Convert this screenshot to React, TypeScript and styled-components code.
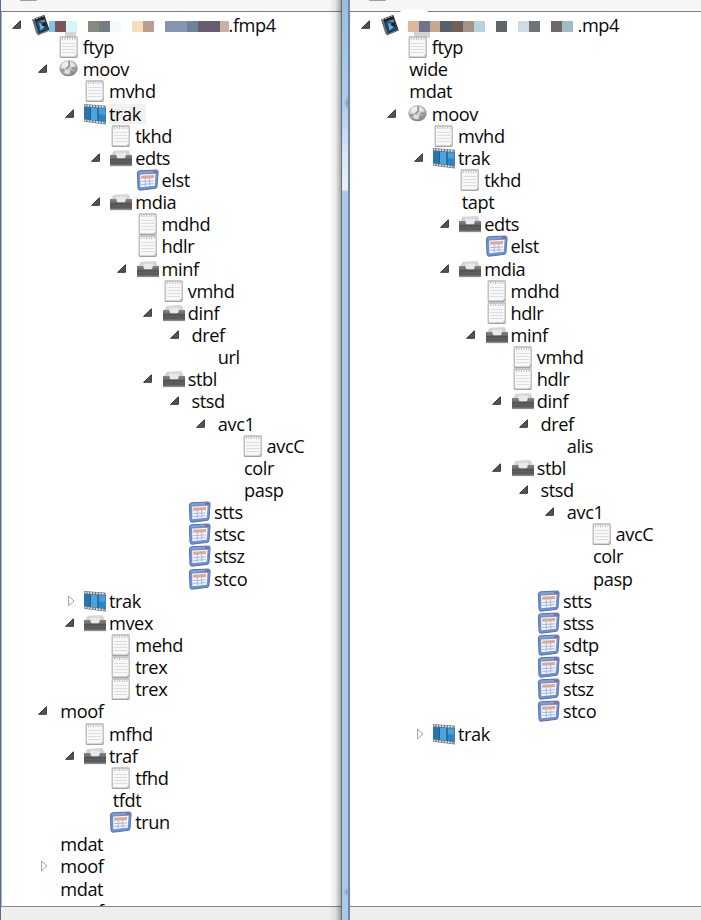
import React from "react";
import styled, { createGlobalStyle } from "styled-components";

const Global = createGlobalStyle`
  * { box-sizing: border-box; }
  html, body { margin: 0; padding: 0; }
  body { font-family: "Open Sans", "Noto Sans", sans-serif; color: #080808; background: #fff; }
`;

const Screen = styled.div`
  display: flex;
  width: 701px;
  height: 920px;
  overflow: hidden;
  background: #fff;
`;
const Pane = styled.section<{ $width: number; $left?: boolean }>`
  width: ${(p) => p.$width}px;
  flex: none;
  display: flex;
  flex-direction: column;
  border-left: ${(p) => (p.$left ? "1px solid #5b6b8b" : "0")};
`;
const Toolbar = styled.header<{ $indent: number }>`
  position: relative;
  height: 12px;
  flex: none;
  padding-left: ${(p) => p.$indent}px;
  background: #f6f6f6;
  border-bottom: 1px solid #7b7e82;
`;
const ToolStub = styled.div`
  width: 17px;
  height: 1px;
  background: #a09d9c;
  border-radius: 0 0 4px 4px;
`;
const Erased = styled.div`
  position: absolute;
  left: 50px;
  top: 9px;
  width: 28px;
  height: 6px;
  border-radius: 50% 50% 0 0;
  background: #fff;
`;
const Body = styled.div<{ $edge: string }>`
  flex: 1;
  min-height: 0;
  overflow: hidden;
  padding-top: 2px;
  border-left: 1px solid ${(p) => p.$edge};
`;
const Footer = styled.footer`
  height: 14px;
  flex: none;
  background: #f0eeed;
  border-top: 1px solid #85888c;
`;
const Shadow = styled.div`
  width: 12px;
  flex: none;
  margin-left: -12px;
  z-index: 1;
  background: linear-gradient(90deg, rgba(0,0,0,0), rgba(0,0,0,0.08) 55%, rgba(0,0,0,0.34));
`;
const Frame = styled.div`
  width: 9px;
  flex: none;
  z-index: 2;
  border-left: 1px solid #64707e;
  border-right: 2px solid #77879a;
  background:
    radial-gradient(ellipse 4px 7px at 6px 103px, rgba(70,95,120,0.5), transparent),
    radial-gradient(ellipse 4px 5px at 5px 892px, rgba(70,95,120,0.35), transparent),
    linear-gradient(#98bedf 0, #a5c8e8 60px, #aecdeb 105px, #dbe6f6 155px, #eceffb 190px, #a9cbea 191px, #a9cbea 100%);
`;
const Row = styled.div<{ $level: number }>`
  height: 22.15px;
  padding-left: ${(p) => 9 + p.$level * 26.25}px;
  display: flex;
  align-items: center;
`;
const Toggle = styled.span`
  width: 19.5px;
  height: 22px;
  flex: none;
  display: flex;
  align-items: center;
`;
const IconSlot = styled.span`
  width: 25px;
  height: 22px;
  flex: none;
  display: flex;
  align-items: center;
`;
const Label = styled.span<{ $plain?: boolean; $selected?: boolean }>`
  height: 20px;
  line-height: 20px;
  padding-right: 5px;
  margin-left: ${(p) => (p.$plain ? 3.5 : 1)}px;
  font-size: 18.2px;
  letter-spacing: -0.4px;
  white-space: nowrap;
  background: ${(p) => (p.$selected ? "#f1f1f1" : "transparent")};
`;
const Mosaic = styled.span<{ $shift: number; $gap: number }>`
  display: flex;
  flex: none;
  margin-left: ${(p) => p.$shift}px;
  margin-right: ${(p) => p.$gap}px;
  z-index: 1;
`;
const Tile = styled.i<{ $w: number; $color: string }>`
  width: ${(p) => p.$w}px;
  height: 11px;
  margin-top: 2px;
  background: ${(p) => p.$color};
`;
const Smudge = styled.i<{ $indent: number; $w: number }>`
  display: block;
  width: ${(p) => p.$w}px;
  height: 6px;
  margin: -4px 0 -2px ${(p) => p.$indent}px;
  background: #d3d2d9;
`;

const Arrow = ({ open }: { open: boolean }) =>
  open ? (
    <svg width="12" height="12" viewBox="0 0 12 12">
      <path d="M9.4 1.8V9.3H1.6Z" fill="#555" stroke="#333" strokeWidth="1" strokeLinejoin="round" />
    </svg>
  ) : (
    <svg width="12" height="14" viewBox="0 0 12 14">
      <path d="M4.6 2V11.8L10 7Z" fill="#fff" stroke="#a3a3a3" strokeWidth="1" />
    </svg>
  );

const DocIcon = () => (
  <svg width="24" height="22" viewBox="0 0 24 22">
    <rect x="3.2" y="1" width="17" height="20.3" rx="0.8" fill="#f8f8f8" stroke="#b8b8b6" strokeWidth="1.3" />
    <path d="M3.4 21.3H19L20.4 19.5" fill="none" stroke="#9a9a98" strokeWidth="1.1" />
    <path d="M5.5 1.2V4M8 1.2V4M10.5 1.2V4M13 1.2V4M15.5 1.2V4M18 1.2V4" stroke="#c0c0be" strokeWidth="1" />
    <path d="M5.2 7.5H18.4M5.2 10.5H18.4M5.2 13.5H18.4M5.2 16.5H18.4" stroke="#d9dee4" strokeWidth="1" />
    <path d="M17 20.8L20 17.6V20.8Z" fill="#c6c6c4" />
  </svg>
);
const DrawerIcon = () => (
  <svg width="24" height="22" viewBox="0 0 24 22">
    <defs>
      <linearGradient id="drawer" x1="0" y1="0" x2="0" y2="1">
        <stop offset="0" stopColor="#858585" />
        <stop offset="0.5" stopColor="#5c5c5c" />
        <stop offset="1" stopColor="#727272" />
      </linearGradient>
    </defs>
    <path d="M4.5 3.8L19.5 2.8L22 8.5H2Z" fill="#dedede" />
    <path d="M4.3 5.2H20M3.2 7H21" stroke="#c4c4c4" strokeWidth="0.8" />
    <path d="M1 8H23V19H1Z" fill="url(#drawer)" />
    <path d="M7 5.5H17.2L16.4 10.2Q16.2 11.3 15 11.3H9.2Q8 11.3 7.8 10.2Z" fill="#e9e9e9" />
    <path d="M1 12.8H23M1 16H23" stroke="#4c4c4c" strokeWidth="0.9" />
    <path d="M1 18.7H23" stroke="#9a9a9a" strokeWidth="0.8" />
  </svg>
);
const TableIcon = () => (
  <svg width="24" height="22" viewBox="0 0 24 22">
    <path d="M3.7 1.8L20 1Q22.2 1 22.1 3L21 17.5Q20.9 19.2 19 19.4L4.2 21.2Q2.2 21.3 2 19.3L1.4 4Q1.4 2 3.7 1.8Z" fill="#6e90cc" stroke="#5675b4" strokeWidth="1" />
    <path d="M3.2 3.4L20 2.4" stroke="#86a6dc" strokeWidth="1.2" />
    <path d="M17 2.9L21 2.7" stroke="#b35776" strokeWidth="1.6" />
    <path d="M4.1 5.6L19.6 4.8L18.8 16.8L4.4 18.3Z" fill="#f1f4fc" />
    <path d="M5.2 8.2L18 7.4" stroke="#e6a684" strokeWidth="3" />
    <path d="M5.3 12.6L17.8 11.9M5.3 15.5L17.5 14.6M9.3 8.2V17M13.7 8V16.6" stroke="#9fb3de" strokeWidth="0.9" />
  </svg>
);
const FilmIcon = () => (
  <svg width="24" height="22" viewBox="0 0 24 22">
    <path d="M1 1L23 2.7V21.5L1 18.8Z" fill="#66727a" />
    <path d="M1.2 4.3L23 5.8V18.6L1.2 16Z" fill="#2a84c6" />
    <path d="M1.2 4.3L6.6 4.7V16.6L1.2 16Z" fill="#2b73ab" />
    <path d="M8 4.8L14.3 5.2V17.5L8 16.8Z" fill="#4ba4dd" />
    <path d="M16 5.4L22 5.8V12L16 11Z" fill="#489fd9" />
    <path d="M7.3 4.7V16.7M15 5.3V17.7" stroke="#1d5c8a" strokeWidth="1" />
    <path d="M1.5 2.5L22.5 4.1M1.5 17.4L22.5 20" stroke="#e3e6e7" strokeWidth="1.7" strokeDasharray="1.8 1.1" />
  </svg>
);
const GlobeIcon = () => (
  <svg width="24" height="22" viewBox="0 0 24 22">
    <defs>
      <radialGradient id="ball" cx="0.42" cy="0.3" r="0.75">
        <stop offset="0" stopColor="#ededed" />
        <stop offset="0.5" stopColor="#bcbcbc" />
        <stop offset="1" stopColor="#757575" />
      </radialGradient>
    </defs>
    <ellipse cx="11.5" cy="10.2" rx="9.2" ry="8.1" fill="url(#ball)" />
    <path d="M4.8 6.6Q7 3.3 11 3.4L11.4 7.6L8.5 10L4 10.2ZM13.2 3.7Q17 4.5 18.8 8L15.2 9L13.2 7.2ZM8.8 11.8L13 12.6L12.2 16.6Q9 16.4 7 14.6Z" fill="#f2f2f2" opacity="0.75" />
    <path d="M12.2 3V8L9.2 11M15 10.2L18.4 10.8M13.8 12.7L15.8 15.2M4.2 12.2L7.2 12" fill="none" stroke="#8a8a8a" strokeWidth="1.4" />
  </svg>
);
const MovieIcon = () => (
  <svg width="24" height="22" viewBox="0 0 24 22">
    <path d="M1.2 5.4L13.2 0.8L18.8 16.4L7 21.2Z" fill="#20252c" />
    <path d="M1.2 5.4L3.8 6.5L8.4 20.6L7 21.2L5.1 19Z" fill="#60707e" />
    <path d="M2.2 5.6L13 1.4" stroke="#a9b3bb" strokeWidth="1.5" strokeDasharray="2 1" />
    <path d="M5 8L14.2 5.2L17 15L8.6 18Z" fill="#23506f" />
    <path d="M6.7 7.4L13.3 5.6L14 8Z" fill="#7e8b95" />
    <path d="M8 8.8L15 11.4L9.6 16.4Z" fill="#63b9e4" />
    <path d="M10.2 11L14.2 8L15.5 13.4Z" fill="#131f2a" />
    <path d="M8.2 20L18 16" stroke="#7199b7" strokeWidth="1" />
  </svg>
);

const icons = { doc: DocIcon, drawer: DrawerIcon, table: TableIcon, film: FilmIcon, globe: GlobeIcon };
type Kind = keyof typeof icons | "";
type Item = [level: number, name: string, kind: Kind, toggle?: "open" | "closed", selected?: boolean];

const fragmented: Item[] = [
  [1, "ftyp", "doc"], [1, "moov", "globe", "open"], [2, "mvhd", "doc"],
  [2, "trak", "film", "open", true], [3, "tkhd", "doc"], [3, "edts", "drawer", "open"],
  [4, "elst", "table"], [3, "mdia", "drawer", "open"], [4, "mdhd", "doc"], [4, "hdlr", "doc"],
  [4, "minf", "drawer", "open"], [5, "vmhd", "doc"], [5, "dinf", "drawer", "open"],
  [6, "dref", "", "open"], [7, "url", ""], [5, "stbl", "drawer", "open"],
  [6, "stsd", "", "open"], [7, "avc1", "", "open"], [8, "avcC", "doc"], [8, "colr", ""],
  [8, "pasp", ""], [6, "stts", "table"], [6, "stsc", "table"], [6, "stsz", "table"],
  [6, "stco", "table"], [2, "trak", "film", "closed"], [2, "mvex", "drawer", "open"],
  [3, "mehd", "doc"], [3, "trex", "doc"], [3, "trex", "doc"], [1, "moof", "", "open"],
  [2, "mfhd", "doc"], [2, "traf", "drawer", "open"], [3, "tfhd", "doc"], [3, "tfdt", ""],
  [3, "trun", "table"], [1, "mdat", ""], [1, "moof", "", "closed"], [1, "mdat", ""],
  [1, "moof", ""],
];
const plain: Item[] = [
  [1, "ftyp", "doc"], [1, "wide", ""], [1, "mdat", ""], [1, "moov", "globe", "open"],
  [2, "mvhd", "doc"], [2, "trak", "film", "open"], [3, "tkhd", "doc"], [3, "tapt", ""],
  [3, "edts", "drawer", "open"], [4, "elst", "table"], [3, "mdia", "drawer", "open"],
  [4, "mdhd", "doc"], [4, "hdlr", "doc"], [4, "minf", "drawer", "open"], [5, "vmhd", "doc"],
  [5, "hdlr", "doc"], [5, "dinf", "drawer", "open"], [6, "dref", "", "open"], [7, "alis", ""],
  [5, "stbl", "drawer", "open"], [6, "stsd", "", "open"], [7, "avc1", "", "open"],
  [8, "avcC", "doc"], [8, "colr", ""], [8, "pasp", ""], [6, "stts", "table"],
  [6, "stss", "table"], [6, "sdtp", "table"], [6, "stsc", "table"], [6, "stsz", "table"],
  [6, "stco", "table"], [2, "trak", "film", "closed"],
];

const Node = ({ item: [level, name, kind, toggle, selected] }: { item: Item }) => {
  const Icon = kind ? icons[kind] : null;
  return (
    <Row $level={level}>
      <Toggle>{toggle && <Arrow open={toggle === "open"} />}</Toggle>
      {Icon && <IconSlot><Icon /></IconSlot>}
      <Label $plain={!Icon} $selected={selected}>{name}</Label>
    </Row>
  );
};

type Tiles = [width: number, color: string][];
const none = "transparent";
const leftTiles: Tiles = [
  [6, "#7fc4e2"], [11, "#7d545b"], [11, "#d5f5f7"], [11, none], [11, "#8a877f"], [11, "#747d84"],
  [11, "#f3f8fd"], [11, none], [11, "#f6dfb8"], [11, "#bb9d8f"], [11, none], [22, "#8794af"],
  [11, "#6e8197"], [22, "#685c70"], [9, "#cbb0a8"],
];
const rightTiles: Tiles = [
  [11, "#d9b998"], [11, "#71738e"], [10, "#c5a98e"], [12, "#59606a"], [11, "#715f59"], [11, "#a29583"],
  [11, "#b9d2de"], [11, none], [11, "#60666b"], [11, none], [11, "#cfdce1"], [11, "#707476"],
  [11, none], [11, "#6f6a69"], [11, "#a2bac8"],
];

const Root = ({ tiles, shift, gap, name }: { tiles: Tiles; shift: number; gap: number; name: string }) => (
  <Row $level={0}>
    <Toggle><Arrow open /></Toggle>
    <IconSlot><MovieIcon /></IconSlot>
    <Mosaic $shift={shift} $gap={gap}>{tiles.map(([w, c], i) => <Tile key={i} $w={w} $color={c} />)}</Mosaic>
    <Label>{name}</Label>
  </Row>
);

export default function App() {
  return (
    <Screen>
      <Global />
      <Pane $width={341} $left>
        <Toolbar $indent={19}><ToolStub /></Toolbar>
        <Body $edge="#aab4c4">
          <Root tiles={leftTiles} shift={-7} gap={-1} name=".fmp4" />
          <Smudge $indent={63} $w={11} />
          {fragmented.map((item, i) => <Node key={i} item={item} />)}
        </Body>
        <Footer />
      </Pane>
      <Shadow />
      <Frame />
      <Pane $width={351}>
        <Toolbar $indent={19}><ToolStub /><Erased /></Toolbar>
        <Body $edge="#f2f5f8">
          <Root tiles={rightTiles} shift={3.5} gap={3.5} name=".mp4" />
          <Smudge $indent={63} $w={16} />
          {plain.map((item, i) => <Node key={i} item={item} />)}
        </Body>
        <Footer />
      </Pane>
    </Screen>
  );
}
